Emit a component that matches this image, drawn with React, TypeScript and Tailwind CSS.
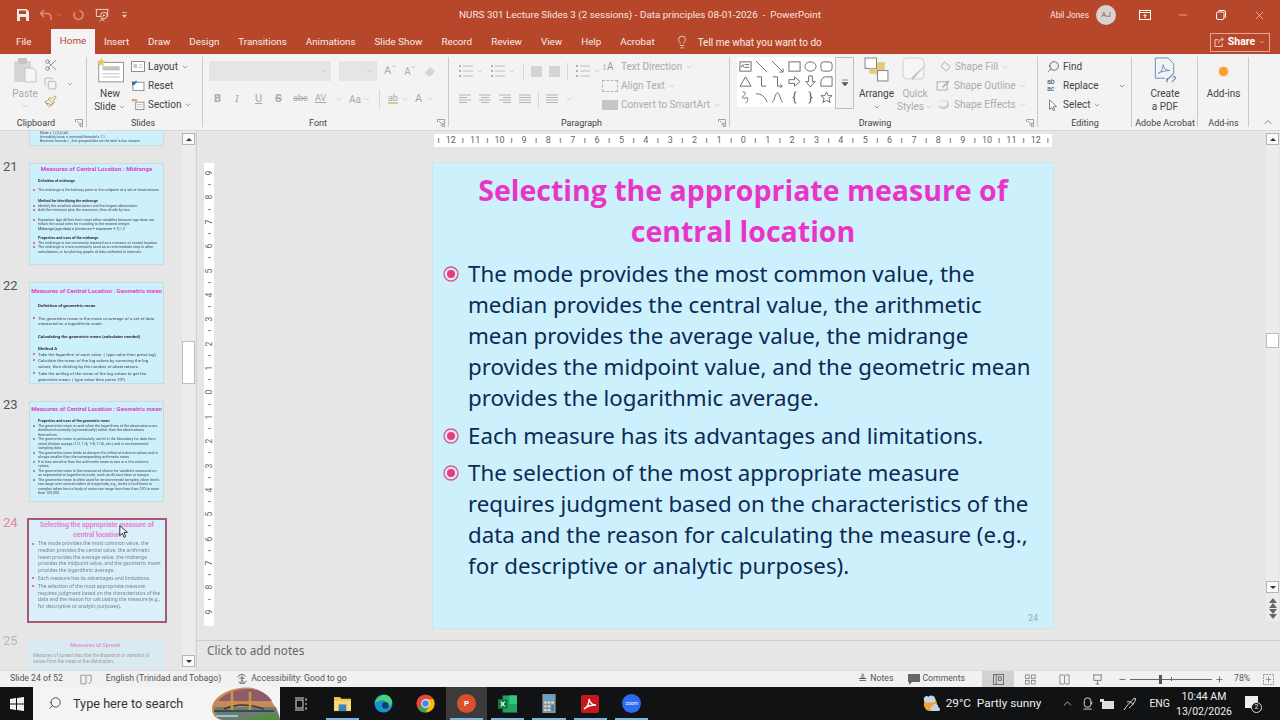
import * as React from 'react';
import {
  ChevronDown,
  ChevronUp,
  Copy,
  Lightbulb,
  Minus,
  Paintbrush,
  Plus,
  Scissors,
  Search,
  X,
} from 'lucide-react';

const Chev = ({ className = 'text-[#666]' }: { className?: string }) => (
  <ChevronDown size={8} strokeWidth={1.6} className={`shrink-0 ${className}`} />
);

function Group({
  width,
  label,
  launcher,
  labelClass = '',
  children,
}: {
  width: string;
  label: string;
  launcher?: boolean;
  labelClass?: string;
  children: React.ReactNode;
}) {
  return (
    <div className={`relative flex h-[76px] shrink-0 flex-col ${width}`}>
      <div className="flex min-h-0 flex-1 pt-[3px]">{children}</div>
      <div className={`h-[14px] text-center text-[9px] leading-[15px] whitespace-nowrap text-[#444] ${labelClass}`}>{label}</div>
      <div className="absolute top-[3px] right-0 h-[70px] w-px bg-[#c9c9c9]" />
      {launcher && (
        <svg viewBox="0 0 8 8" className="absolute right-[4px] bottom-[3px] h-[8px] w-[8px]">
          <path d="M.5 3V.5H7.5V7.5H5M2 2l4 4M6 3.5V6H3.5" fill="none" stroke="#8a8a8a" strokeWidth=".8" />
        </svg>
      )}
    </div>
  );
}

function SmallBtn({
  icon,
  label,
  chev,
  off,
}: {
  icon?: React.ReactNode;
  label: string;
  chev?: boolean;
  off?: boolean;
}) {
  return (
    <div className={`flex h-[19px] items-center gap-[3px] whitespace-nowrap text-[10px] ${off ? 'text-[#ababab]' : 'text-[#444]'}`}>
      {icon}
      <span>{label}</span>
      {chev && <Chev className={off ? 'text-[#b5b5b5]' : 'text-[#555]'} />}
    </div>
  );
}

const ListIcon = () => (
  <svg viewBox="0 0 16 14" className="h-[14px] w-[16px]" fill="none" stroke="#bdbdbd">
    <path d="M5 2h10M5 7h10M5 12h10" />
    <path d="M1 2h2M1 7h2M1 12h2" stroke="#9a9a9a" strokeWidth="1.6" />
  </svg>
);

const AlignIcon = ({ d }: { d: string }) => (
  <svg viewBox="0 0 14 10" className="h-[10px] w-[14px]" fill="none" stroke="#b4b4b4">
    <path d={d} />
  </svg>
);

function Clipboard() {
  return (
    <div className="flex pl-[12px]">
      <div className="flex w-[26px] flex-col items-center">
        <svg viewBox="0 0 24 26" className="h-[26px] w-[24px]">
          <rect x="1" y="4" width="17" height="21" rx="1" fill="#d6d6d6" />
          <rect x="5" y="1" width="9" height="6" rx="1" fill="#c4c4c4" />
          <path d="M12 11h8l3 3v11H12z" fill="#f6f6f6" stroke="#c2c2c2" />
        </svg>
        <span className="mt-[4px] text-[10px] leading-[13px] text-[#ababab]">Paste</span>
        <Chev className="mt-[2px] text-[#b5b5b5]" />
      </div>
      <div className="ml-[6px] flex flex-col gap-[5px] pt-[1px]">
        <Scissors size={14} strokeWidth={1.2} className="text-[#5d6d7a]" />
        <div className="flex items-center gap-[9px]">
          <Copy size={13} strokeWidth={1.2} className="text-[#999]" />
          <Chev />
        </div>
        <Paintbrush size={13} strokeWidth={1.5} className="text-[#a98f3c]" />
      </div>
    </div>
  );
}

function Slides() {
  return (
    <div className="flex pl-[8px]">
      <div className="flex w-[30px] flex-col items-center text-[10px] leading-[13px] whitespace-nowrap text-[#444]">
        <svg viewBox="0 0 26 24" className="h-[27px] w-[28px] shrink-0">
          <rect x="2.5" y="4.5" width="23" height="18" fill="#fff" stroke="#9b9b9b" />
          <rect x="6" y="8" width="16" height="4" fill="#c4c4c4" />
          <path d="M6 15h16M6 18h16" stroke="#c4c4c4" />
          <path d="M5 0l1.3 2.7L9 3.5 6.8 5.3 7.4 8 5 6.6 2.6 8l.6-2.7L1 3.5l2.7-.8z" fill="#eac46a" />
        </svg>
        <span className="mt-[3px]">New</span>
        <span className="flex items-center gap-[2px]">Slide <Chev /></span>
      </div>
      <div className="ml-[6px] flex flex-col">
        <SmallBtn
          chev
          label="Layout"
          icon={
            <svg viewBox="0 0 14 11" className="h-[11px] w-[14px]" fill="#fff" stroke="#8d8d8d">
              <rect x=".5" y=".5" width="13" height="10" />
              <rect x="2.5" y="3" width="3.5" height="4" fill="#c9c9c9" stroke="none" />
              <path d="M7.5 4h4M7.5 6.5h4" stroke="#c9c9c9" />
            </svg>
          }
        />
        <SmallBtn
          label="Reset"
          icon={
            <svg viewBox="0 0 14 12" className="h-[11px] w-[14px]" fill="#fff" stroke="#8d8d8d">
              <rect x="1.5" y="2.5" width="12" height="9" />
              <path d="M1 5a4 4 0 0 1 5-3" stroke="#2f6ea8" fill="none" strokeWidth="1.4" />
              <path d="M0 1l1 5 4-2z" fill="#2f6ea8" stroke="none" />
            </svg>
          }
        />
        <SmallBtn
          chev
          label="Section"
          icon={
            <svg viewBox="0 0 14 12" className="h-[11px] w-[14px]" fill="#fff" stroke="#8d8d8d">
              <rect x="4.5" y="3.5" width="9" height="8" />
              <rect x="0" y="0" width="6" height="2.5" fill="#e0a27e" stroke="none" />
              <path d="M6 6h6M6 8.5h6" stroke="#bbb" />
            </svg>
          }
        />
      </div>
    </div>
  );
}

function Font() {
  return (
    <div className="flex flex-col pl-[6px]">
      <div className="flex h-[26px] items-center pt-[2px]">
        <div className="flex h-[20px] w-[122px] items-center justify-end bg-[#e5e5e5] pr-[3px]">
          <Chev className="text-[#b5b5b5]" />
        </div>
        <div className="ml-[8px] flex h-[20px] w-[38px] items-center justify-end bg-[#e5e5e5] pr-[3px]">
          <Chev className="text-[#b5b5b5]" />
        </div>
        <span className="ml-[7px] text-[11px] text-[#adadad]">Aˆ</span>
        <span className="ml-[8px] text-[10px] text-[#adadad]">Aˇ</span>
        <svg viewBox="0 0 12 12" className="ml-[9px] h-[12px] w-[12px]">
          <path d="M1 8l5-6 5 4-4 5H4z" fill="#d4d4d4" />
        </svg>
      </div>
      <div className="mt-[5px] flex h-[22px] items-center text-[11px] text-[#a8a8a8]">
        <span className="ml-[5px] w-[21px] font-bold">B</span>
        <span className="w-[20px] font-serif italic">I</span>
        <span className="w-[20px] underline">U</span>
        <span className="w-[18px] font-bold line-through">S</span>
        <span className="w-[22px] text-[9px] line-through">abc</span>
        <span className="w-[20px] text-[9px] underline">AV</span>
        <Chev className="text-[#b5b5b5]" />
        <span className="ml-[6px] text-[10px]">Aa</span>
        <Chev className="ml-[2px] text-[#b5b5b5]" />
        <div className="mx-[8px] h-[18px] w-px bg-[#d6d6d6]" />
        <span className="text-[9px] underline decoration-[#d4cf82] decoration-2">ab</span>
        <Chev className="ml-[3px] text-[#b5b5b5]" />
        <span className="ml-[6px] text-[11px]">A</span>
        <Chev className="ml-[4px] text-[#b5b5b5]" />
      </div>
    </div>
  );
}

function Paragraph() {
  return (
    <div className="flex">
      <div className="flex w-[153px] flex-col pl-[9px]">
        <div className="flex h-[26px] items-center pt-[2px]">
          <ListIcon />
          <Chev className="ml-[2px] text-[#b5b5b5]" />
          <div className="ml-[6px]"><ListIcon /></div>
          <Chev className="ml-[2px] text-[#b5b5b5]" />
          <div className="mx-[7px] h-[17px] w-px bg-[#d6d6d6]" />
          <div className="h-[11px] w-[11px] bg-[#d4d4d4]" />
          <div className="ml-[7px] h-[11px] w-[11px] bg-[#d4d4d4]" />
          <div className="mx-[7px] h-[17px] w-px bg-[#d6d6d6]" />
          <ListIcon />
          <Chev className="ml-[2px] text-[#b5b5b5]" />
        </div>
        <div className="mt-[5px] flex h-[22px] items-center gap-[6px]">
          <AlignIcon d="M1 1h12M1 3.5h8M1 6h12M1 8.5h8" />
          <AlignIcon d="M1 1h12M3 3.5h8M1 6h12M3 8.5h8" />
          <AlignIcon d="M1 1h12M5 3.5h8M1 6h12M5 8.5h8" />
          <AlignIcon d="M1 1h12M1 3.5h12M1 6h12M1 8.5h12" />
          <div className="h-[17px] w-px bg-[#d6d6d6]" />
          <AlignIcon d="M1 1h12M1 3.5h12M1 6h12M1 8.5h12" />
          <Chev className="text-[#b5b5b5]" />
        </div>
      </div>
      <div className="flex flex-col">
        <SmallBtn off chev label="Text Direction" icon={<span className="w-[16px] text-[10px] text-[#999]">↕A</span>} />
        <SmallBtn off chev label="Align Text" icon={<span className="h-[12px] w-[16px] border border-dashed border-[#b5b5b5]" />} />
        <SmallBtn off chev label="Convert to SmartArt" icon={<span className="h-[10px] w-[16px] bg-[#c6c6c6]" />} />
      </div>
    </div>
  );
}

function ShapesGallery() {
  return (
    <div className="ml-[7px] flex h-[52px]">
      <div className="grid h-[50px] w-[98px] grid-cols-6 place-items-center bg-white py-[2px]">
        <svg viewBox="0 0 14 14" className="h-[13px] w-[13px]" fill="none" stroke="#666"><rect x="1" y="2" width="12" height="10" /><path d="M6 5h5M6 8h5M2.5 8l1.5-3 1.5 3" /></svg>
        <svg viewBox="0 0 14 14" className="h-[13px] w-[13px]" fill="none" stroke="#666"><path d="M1 1l12 12" /></svg>
        <svg viewBox="0 0 14 14" className="h-[13px] w-[13px]" fill="none" stroke="#666"><path d="M1 1l12 12M13 9v4H9" /></svg>
        <svg viewBox="0 0 14 14" className="h-[13px] w-[13px]" fill="none" stroke="#666"><rect x="1" y="2" width="12" height="10" /></svg>
        <svg viewBox="0 0 14 14" className="h-[13px] w-[13px]" fill="none" stroke="#666"><ellipse cx="7" cy="7" rx="6" ry="5" /></svg>
        <svg viewBox="0 0 14 14" className="h-[13px] w-[13px]" fill="none" stroke="#666"><rect x="1" y="2" width="12" height="10" rx="3" /></svg>
        <svg viewBox="0 0 14 14" className="h-[13px] w-[13px]" fill="none" stroke="#666"><path d="M7 2l6 10H1z" /></svg>
        <svg viewBox="0 0 14 14" className="h-[13px] w-[13px]" fill="none" stroke="#666"><path d="M2 2h5v10h5" /></svg>
        <svg viewBox="0 0 14 14" className="h-[13px] w-[13px]" fill="none" stroke="#666"><path d="M2 2h5v10h5M10 10l2 2-2 2" /></svg>
        <svg viewBox="0 0 14 14" className="h-[13px] w-[13px]" fill="none" stroke="#666"><path d="M1 5h6V2l6 5-6 5V9H1z" /></svg>
        <svg viewBox="0 0 14 14" className="h-[13px] w-[13px]" fill="none" stroke="#666"><path d="M5 1h4v6h3l-5 6-5-6h3z" /></svg>
        <svg viewBox="0 0 14 14" className="h-[13px] w-[13px]" fill="none" stroke="#666"><path d="M1 7a6 6 0 0 1 6-5h6v10H1z" /></svg>
        <svg viewBox="0 0 14 14" className="h-[13px] w-[13px]" fill="none" stroke="#666"><path d="M4 1c5 0 2 4 0 5s3 3 4 1 3 4-1 6" /></svg>
        <svg viewBox="0 0 14 14" className="h-[13px] w-[13px]" fill="none" stroke="#666"><path d="M1 3c6 0 10 3 12 9" /></svg>
        <svg viewBox="0 0 14 14" className="h-[13px] w-[13px]" fill="none" stroke="#666"><path d="M1 12c3 0 3-10 6-10s3 10 6 10" /></svg>
        <span className="text-[12px] leading-none text-[#555]">{'{'}</span>
        <span className="text-[12px] leading-none text-[#555]">{'}'}</span>
        <svg viewBox="0 0 14 14" className="h-[13px] w-[13px]" fill="none" stroke="#666"><path d="M7 1l1.8 4H13l-3.4 2.8 1.3 4.7L7 10l-3.9 2.5 1.3-4.7L1 5h4.200z" /></svg>
      </div>
      <div className="flex h-[52px] w-[19px] items-center justify-center border border-[#bfbfbf] bg-[#f3f3f3] text-[#555]">
        <svg viewBox="0 0 8 8" className="h-[8px] w-[8px]"><path d="M1 1h6M1 3.500h6L4 7z" fill="#555" stroke="#555" strokeWidth=".6" /></svg>
      </div>
    </div>
  );
}

function Drawing() {
  return (
    <div className="flex">
      <ShapesGallery />
      <div className="ml-[4px] flex w-[37px] flex-col items-center text-[10px] leading-[13px] text-[#444]">
        <svg viewBox="0 0 24 24" className="h-[25px] w-[25px]">
          <rect x="11" y="5" width="9" height="12" fill="#e6c97a" />
          <rect x="1" y="1" width="11" height="10" fill="#fff" stroke="#8a8a8a" />
          <rect x="13" y="13" width="10" height="10" fill="#fff" stroke="#8a8a8a" />
          <rect x="5" y="11" width="6" height="5" fill="#e6c97a" />
        </svg>
        <span className="mt-[5px]">Arrange</span>
        <Chev className="mt-[3px]" />
      </div>
      <div className="ml-[2px] flex w-[36px] flex-col items-center text-[10px] leading-[13px] text-[#ababab]">
        <svg viewBox="0 0 26 26" className="h-[26px] w-[26px]">
          <rect x="1" y="1" width="21" height="21" rx="4" fill="#f6f6f6" stroke="#cfcfcf" />
          <path d="M25 7L15 18l-4 5-2-2 5-5z" fill="#c5c5c5" />
        </svg>
        <span className="mt-[4px]">Quick</span>
        <span className="flex items-center gap-[1px]">Styles <Chev className="text-[#b5b5b5]" /></span>
      </div>
      <div className="ml-[3px] flex flex-col">
        <SmallBtn off chev label="Shape Fill" icon={<svg viewBox="0 0 14 12" className="ml-[3px] h-[11px] w-[13px]" fill="none" stroke="#a8a8a8"><path d="M6 1l6 5-4 5-6-5z" /></svg>} />
        <SmallBtn off chev label="Shape Outline" icon={<svg viewBox="0 0 16 12" className="h-[11px] w-[15px]" fill="none" stroke="#a8a8a8"><rect x="1" y="2" width="11" height="9" /><path d="M7 8l7-7" strokeWidth="1.6" /></svg>} />
        <SmallBtn off chev label="Shape Effects" icon={<svg viewBox="0 0 16 12" className="h-[11px] w-[15px]"><ellipse cx="8" cy="6" rx="6" ry="5" fill="#c9c9c9" /><ellipse cx="7" cy="5" rx="5" ry="3.500" fill="#f2f2f2" /></svg>} />
      </div>
    </div>
  );
}

function Editing() {
  return (
    <div className="flex flex-col pl-[9px]">
      <SmallBtn label="Find" icon={<Search size={13} strokeWidth={1.4} className="-scale-x-100 text-[#2b4c6b]" />} />
      <div className="flex h-[19px] items-center whitespace-nowrap text-[10px] text-[#444]">
        <span className="w-[16px] text-[7px] leading-[7px] text-[#2b4c6b]">ab<br />ac</span>
        <span>Replace</span>
        <Chev className="ml-[19px]" />
      </div>
      <SmallBtn
        chev
        label="Select"
        icon={
          <svg viewBox="0 0 12 14" className="mr-[1px] h-[12px] w-[12px]" fill="#fff" stroke="#5a6a7a">
            <path d="M2 1l8 8H6l2 4-1.500.8L4.500 10 2 12z" />
          </svg>
        }
      />
    </div>
  );
}

function Adobe() {
  return (
    <div className="flex w-full flex-col items-center text-[10px] leading-[13px] text-[#444]">
      <svg viewBox="0 0 24 28" className="h-[27px] w-[24px]" fill="none" stroke="#5e8fbd" strokeWidth="1">
        <path d="M2 1h13l6 6v10M2 1v21h10" />
        <path d="M5 17c4-2 5-6 5-9 1 4 3 6 7 6-4 0-9 1-12 3z" />
        <path d="M14 24l7-7m-6 9c-2-1-2-3 0-4m5-1c2-2 4 1 2 2l-3 3" strokeWidth="1.200" />
      </svg>
      <span className="mt-[3px]">Create</span>
      <span>a PDF</span>
    </div>
  );
}

function Ribbon() {
  return (
    <div className="flex h-[77px] shrink-0 border-b border-[#d8d8d8] bg-[#f3f3f3]">
      <Group width="w-[87px]" label="Clipboard" labelClass="pr-[15px]" launcher>
        <Clipboard />
      </Group>
      <Group width="w-[116px]" label="Slides" labelClass="pr-[4px]">
        <Slides />
      </Group>
      <Group width="w-[246px]" label="Font" labelClass="pr-[16px]" launcher>
        <Font />
      </Group>
      <Group width="w-[281px]" label="Paragraph" labelClass="pr-[16px]" launcher>
        <Paragraph />
      </Group>
      <Group width="w-[308px]" label="Drawing" labelClass="pr-[18px]" launcher>
        <Drawing />
      </Group>
      <Group width="w-[94px]" label="Editing">
        <Editing />
      </Group>
      <Group width="w-[66px]" label="Adobe Acrobat">
        <Adobe />
      </Group>
      <Group width="w-[51px]" label="Add-ins">
        <div className="flex w-full flex-col items-center">
          <div className="mt-[10px] h-[9px] w-[9px] rounded-full bg-[#f7a02c] shadow-[0_0_3px_#f9c47a]" />
          <span className="mt-[11px] text-[10px] leading-[13px] text-[#444]">Add-ins</span>
        </div>
      </Group>
      <div className="flex flex-1 items-end justify-end pr-[6px] pb-[2px]">
        <ChevronUp size={12} strokeWidth={1.4} className="text-[#555]" />
      </div>
    </div>
  );
}

function TitleBar() {
  return (
    <div className="grid h-[30px] shrink-0 grid-cols-[1fr_auto_1fr] items-center bg-[#b7472a] text-white">
      <div className="flex items-center pl-[17px]">
        <svg viewBox="0 0 12 12" className="h-[12px] w-[12px]" fill="#f7e9e4">
          <path d="M0 0h9.500L12 2.500V12H0zM2 1.500V5h7V1.500zM3 8v4h6V8z" fillRule="evenodd" />
        </svg>
        <svg viewBox="0 0 14 12" className="ml-[10px] h-[12px] w-[14px]" fill="none" stroke="#d98b74" strokeWidth="1.600">
          <path d="M5 1L1.500 4.500 5 8M2 4.500h6a4 4 0 0 1 4 4V11" />
        </svg>
        <Chev className="ml-[2px] text-[#d98b74]" />
        <svg viewBox="0 0 12 12" className="ml-[9px] h-[12px] w-[12px]" fill="none" stroke="#d98b74" strokeWidth="1.600">
          <path d="M7.500 1.500A4.500 4.500 0 1 1 3 3" />
        </svg>
        <svg viewBox="0 0 16 16" className="ml-[10px] h-[15px] w-[16px]" fill="none" stroke="#f3d9d0">
          <path d="M1 1.500h14M2 2v7h12V2M8 9v3M5.500 14L8 12l2.500 2" />
          <circle cx="10" cy="8" r="3.500" fill="#b7472a" />
          <path d="M9 6.500l2.500 1.500L9 9.500z" fill="#f3d9d0" stroke="none" />
        </svg>
        <svg viewBox="0 0 6 8" className="ml-[12px] h-[7px] w-[5px]" fill="#ecc7ba">
          <path d="M0 0h6v1H0zM0 3h6L3 7z" />
        </svg>
      </div>
      <div className="text-[9.9px] text-[#f6e6e1]">NURS 301 Lecture Slides 3 (2 sessions) - Data principles 08-01-2026&nbsp; -&nbsp; PowerPoint</div>
      <div className="flex items-center justify-end pr-[14px]">
        <span className="text-[8.3px] text-[#f6e6e1]">Abil Jones</span>
        <div className="ml-[7px] flex h-[20px] w-[20px] items-center justify-center rounded-full bg-[#d8d3d2] text-[8px] text-[#8a5a4d]">AJ</div>
        <svg viewBox="0 0 12 10" className="ml-[23px] h-[10px] w-[12px]" fill="none" stroke="#fff">
          <rect x=".5" y=".5" width="11" height="9" />
          <path d="M.5 2.500h11M6 8V4.500M4.500 6L6 4.500 7.500 6" />
        </svg>
        <Minus size={12} strokeWidth={1} className="ml-[26px]" />
        <svg viewBox="0 0 10 10" className="ml-[27px] h-[10px] w-[10px]" fill="none" stroke="#fff">
          <rect x=".5" y="2" width="7.500" height="7.500" rx="1.500" />
          <path d="M2.500 .5h5.500a1.500 1.500 0 0 1 1.500 1.500v5.500" />
        </svg>
        <X size={13} strokeWidth={1} className="ml-[27px]" />
      </div>
    </div>
  );
}

const TABS = ['Insert', 'Draw', 'Design', 'Transitions', 'Animations', 'Slide Show', 'Record', 'Review', 'View', 'Help', 'Acrobat'];

function TabBar() {
  return (
    <div className="flex h-[24px] shrink-0 items-center bg-[#b7472a] text-[9.8px] text-[#f9ece8]">
      <span className="ml-[16px] w-[35px]">File</span>
      <div className="flex h-[25px] w-[44px] items-center justify-center self-end bg-[#f3f3f3] text-[#b7472a]">Home</div>
      <div className="ml-[9px] flex items-center gap-[19px]">
        {TABS.map((t) => (
          <span key={t} className="whitespace-nowrap">{t}</span>
        ))}
      </div>
      <Lightbulb size={14} strokeWidth={1.3} className="ml-[20px]" />
      <span className="ml-[9px] text-[10px]">Tell me what you want to do</span>
      <div className="mr-[10px] ml-auto flex h-[19px] w-[60px] items-center justify-center gap-[3px] border border-[#e6a68f] text-[10.5px] font-bold text-white">
        <svg viewBox="0 0 12 11" className="h-[10px] w-[11px]" fill="none" stroke="#f6dcd2">
          <path d="M5 3H1v7.500h8V7M5 6.500C5 4 7 2.500 9 2.500M8 .5l2.500 2L8 4.500" />
        </svg>
        Share
        <Chev className="text-[#f6dcd2]" />
      </div>
    </div>
  );
}

function ThumbHead({ children, className = '' }: { children: React.ReactNode; className?: string }) {
  return <div className={`pl-[8px] font-bold text-[#333] ${className}`}>{children}</div>;
}

function ThumbBullet({ children, className = '' }: { children: React.ReactNode; className?: string }) {
  return (
    <div className={`flex gap-[3px] pl-[3px] text-[#4a4a4a] ${className}`}>
      <span className="mt-[1px] h-[2px] w-[2px] shrink-0 rounded-full bg-[#d9468f]" />
      <span>{children}</span>
    </div>
  );
}

function Thumb({
  n,
  title,
  children,
  className,
  titleClass,
}: {
  n: number;
  title: React.ReactNode;
  children: React.ReactNode;
  className: string;
  titleClass: string;
}) {
  return (
    <div className="flex shrink-0">
      <div className="-mt-[3px] w-[29px] pl-[3px] text-[13px] leading-[14px] text-[#555]">{n}</div>
      <div className={`w-[135px] overflow-hidden border border-[#cfd8dc] bg-[#cdf0fd] pr-[3px] ${className}`}>
        <div className={`-mr-[3px] text-center text-[6.1px] leading-[9px] font-bold whitespace-nowrap text-[#e23fc6] ${titleClass}`}>{title}</div>
        <div className="blur-[0.25px]">{children}</div>
      </div>
    </div>
  );
}

const BODY_A = [
  'The mode provides the most common value, the',
  'median provides the central value, the arithmetic',
  'mean provides the average value, the midrange',
  'provides the midpoint value, and the geometric mean',
  'provides the logarithmic average.',
];
const BODY_B = ['Each measure has its advantages and limitations.'];
const BODY_C = [
  'The selection of the most appropriate measure',
  'requires judgment based on the characteristics of the',
  'data and the reason for calculating the measure (e.g.,',
  'for descriptive or analytic purposes).',
];

function MiniBody({ lines }: { lines: string[] }) {
  return (
    <div className="flex gap-[4px] pl-[3px]">
      <span className="mt-[2.5px] h-[2px] w-[2px] shrink-0 rounded-full bg-[#d9468f]" />
      <div className="whitespace-nowrap">
        {lines.map((l) => (
          <div key={l}>{l}</div>
        ))}
      </div>
    </div>
  );
}

function ThumbnailPane() {
  return (
    <div className="flex h-full w-[197px] shrink-0 border-r border-[#cfcfcf]">
      <div className="flex w-[182px] shrink-0 flex-col gap-[17px] overflow-hidden">
        <div className="ml-[29px] flex h-[15px] w-[135px] shrink-0 flex-col justify-end overflow-hidden border border-t-0 border-[#cfd8dc] bg-[#cdf0fd] pb-[2px] pl-[10px] text-[3.4px] leading-[4px] text-[#4a4a4a] blur-[0.25px]">
          <div>Mode = 1,2,3,4 (all)</div>
          <div>bimodality issue: = unimodal/bimodal = 1.1</div>
          <div>Business formula (: , first grouped data set the total is four classes</div>
        </div>
        <Thumb n={21} title="Measures of Central Location : Midrange" titleClass="" className="h-[102px] text-[3.7px] leading-[4.5px]">
          <ThumbHead className="mt-[6px]">Definition of midrange</ThumbHead>
          <ThumbBullet className="mt-[4px]">The midrange is the halfway point or the midpoint of a set of observations.</ThumbBullet>
          <ThumbHead className="mt-[7px]">Method for identifying the midrange</ThumbHead>
          <ThumbBullet>Identify the smallest observation and the largest observation.</ThumbBullet>
          <ThumbBullet>Add the minimum plus the maximum, then divide by two.</ThumbBullet>
          <ThumbBullet className="mt-[5px]">Exception: Age differs from most other variables because age does not follow the usual rules for rounding to the nearest integer.</ThumbBullet>
          <ThumbHead className="font-normal">Midrange (age data) = (minimum + maximum + 1) / 2</ThumbHead>
          <ThumbHead className="mt-[5px]">Properties and uses of the midrange</ThumbHead>
          <ThumbBullet>The midrange is not commonly reported as a measure of central location.</ThumbBullet>
          <ThumbBullet>The midrange is more commonly used as an intermediate step in other calculations, or for plotting graphs of data collected in intervals.</ThumbBullet>
        </Thumb>
        <Thumb n={22} title="Measures of Central Location : Geometric mean" titleClass="pt-[3px]" className="h-[102px] text-[4.4px] leading-[5.5px]">
          <ThumbHead className="mt-[8px]">Definition of geometric mean</ThumbHead>
          <ThumbBullet className="mt-[7px]">The geometric mean is the mean or average of a set of data measured on a logarithmic scale.</ThumbBullet>
          <ThumbHead className="mt-[7px]">Calculating the geometric mean (calculator needed)</ThumbHead>
          <ThumbHead className="mt-[7px]">Method A</ThumbHead>
          <ThumbBullet>Take the logarithm of each value. ( type value then press log)</ThumbBullet>
          <ThumbBullet className="mt-[1px]">Calculate the mean of the log values by summing the log values, then dividing by the number of observations.</ThumbBullet>
          <ThumbBullet className="mt-[2px]">Take the antilog of the mean of the log values to get the geometric mean. ( type value then press 10ˣ)</ThumbBullet>
        </Thumb>
        <Thumb n={23} title="Measures of Central Location : Geometric mean" titleClass="pt-[2px]" className="h-[101px] text-[3.7px] leading-[4.5px]">
          <ThumbHead className="mt-[6px]">Properties and uses of the geometric mean</ThumbHead>
          <ThumbBullet>The geometric mean is used when the logarithms of the observations are distributed normally (symmetrically) rather than the observations themselves.</ThumbBullet>
          <ThumbBullet>The geometric mean is particularly useful in the laboratory for data from serial dilution assays (1/2, 1/4, 1/8, 1/16, etc.) and in environmental sampling data.</ThumbBullet>
          <ThumbBullet>The geometric mean tends to dampen the effect of extreme values and is always smaller than the corresponding arithmetic mean.</ThumbBullet>
          <ThumbBullet>It is less sensitive than the arithmetic mean to one or a few extreme values.</ThumbBullet>
          <ThumbBullet>The geometric mean is the measure of choice for variables measured on an exponential or logarithmic scale, such as dilution titers or assays.</ThumbBullet>
          <ThumbBullet>The geometric mean is often used for environmental samples, when levels can range over several orders of magnitude, e.g., levels of coliforms in samples taken from a body of water can range from less than 100 to more than 100,000.</ThumbBullet>
        </Thumb>
        <div className="-mt-[1px] flex shrink-0">
          <div className="-mt-[2px] w-[27px] pl-[3px] text-[13px] leading-[14px] text-[#d38aa2]">24</div>
          <div className="h-[105px] w-[140px] overflow-hidden border-[2.5px] border-[#a35a74] bg-[#d9eff9] font-['Noto_Sans',sans-serif] text-[4.86px] leading-[6.75px] text-[#77808c]">
            <div className="pt-[1px] text-center font-['Roboto',sans-serif] text-[6.85px] leading-[9.500px] font-bold text-[#e57fd3]">
              Selecting the appropriate measure of<br />central location
            </div>
            <div className="flex flex-col gap-[1.2px] blur-[0.25px]">
              <MiniBody lines={BODY_A} />
              <MiniBody lines={BODY_B} />
              <MiniBody lines={BODY_C} />
            </div>
          </div>
        </div>
        <div className="flex shrink-0 opacity-50">
          <div className="-mt-[6px] w-[29px] pl-[3px] text-[13px] leading-[14px] text-[#888]">25</div>
          <div className="h-[102px] w-[135px] bg-[#cdf0fd] pr-[3px] text-[4.5px] leading-[6px]">
            <div className="pt-[2px] text-center text-[5.5px] font-bold text-[#e23fc6]">Measures of Spread</div>
            <div className="mt-[5px] pl-[4px] text-[#555]">Measures of spread describe the dispersion or variation of values from the mean or the distribution.</div>
          </div>
        </div>
      </div>
      <Scrollbar thumbClass="mt-[196px] h-[43px]" bottomClass="mb-[3px]" />
    </div>
  );
}

function Scrollbar({
  thumbClass,
  bottomClass,
  children,
}: {
  thumbClass: string;
  bottomClass: string;
  children?: React.ReactNode;
}) {
  return (
    <div className="flex w-[13px] shrink-0 flex-col bg-[#ececec] pt-[2px]">
      <div className="flex h-[12px] shrink-0 items-center justify-center border border-[#b5b5b5] bg-[#fafafa]">
        <span className="h-0 w-0 border-x-[3px] border-b-[3px] border-x-transparent border-b-[#333]" />
      </div>
      <div className={`shrink-0 border border-[#bdbdbd] bg-white ${thumbClass}`} />
      <div className={`mt-auto flex h-[12px] shrink-0 items-center justify-center border border-[#b5b5b5] bg-[#fafafa] ${bottomClass}`}>
        <span className="h-0 w-0 border-x-[3px] border-t-[3px] border-x-transparent border-t-[#333]" />
      </div>
      {children}
    </div>
  );
}

const HRULER: string[] = [];
for (let i = 12; i >= 0; i--) {
  HRULER.push('ı', String(i));
}
for (let i = 1; i <= 12; i++) {
  HRULER.push('ı', String(i));
}
HRULER.push('ı');

function HorizontalRuler() {
  return (
    <div className="mt-[3px] ml-[237px] flex h-[13px] w-[618px] items-center overflow-hidden bg-white text-[9px] leading-none text-[#666]">
      {HRULER.map((v, i) => (
        <span key={i} className="w-[12.2px] shrink-0 text-center first:-ml-[1.5px]">{v}</span>
      ))}
    </div>
  );
}

const VRULER: string[] = [];
for (let i = 9; i >= 0; i--) {
  VRULER.push(String(i), 'ı');
}
for (let i = 1; i <= 9; i++) {
  VRULER.push(String(i), 'ı');
}
VRULER.pop();

function VerticalRuler() {
  return (
    <div className="flex h-[463px] w-[10px] shrink-0 flex-col items-center bg-white pt-[4px] text-[8.5px] leading-none text-[#666]">
      {VRULER.map((v, i) => (
        <span key={i} className="flex h-[12.2px] w-[10px] shrink-0 -rotate-90 items-center justify-center">
          {v === 'ı' ? <span className="h-px w-[3px] rotate-90 bg-[#888]" /> : v}
        </span>
      ))}
    </div>
  );
}

const Bullet = () => (
  <svg viewBox="0 0 16 16" className="mt-[8px] h-[16px] w-[16px] shrink-0">
    <circle cx="8" cy="8" r="7" fill="none" stroke="#ea4f86" strokeWidth="1.300" />
    <circle cx="8" cy="8" r="4" fill="#ea3b7d" />
  </svg>
);

function SlideBody({ lines }: { lines: string[] }) {
  return (
    <div className="flex gap-[9px] pl-[10px]">
      <Bullet />
      <div className="whitespace-nowrap">
        {lines.map((l) => (
          <div key={l}>{l}</div>
        ))}
      </div>
    </div>
  );
}

function Slide() {
  return (
    <div className="flex h-[465px] w-[620px] shrink-0 flex-col bg-[#cdf0fd] shadow-[0_0_0_1px_#d4e2e8]">
      <div className="pt-[7px] text-center font-['Open_Sans',sans-serif] text-[28.5px] leading-[41px] font-bold text-[#ea34c8]">
        Selecting the appropriate measure of<br />central location
      </div>
      <div className="mt-[6px] flex flex-col gap-[6.5px] font-['Noto_Sans',sans-serif] text-[22.3px] leading-[31px] text-[#0c2a55]">
        <SlideBody lines={BODY_A} />
        <SlideBody lines={BODY_B} />
        <SlideBody lines={BODY_C} />
      </div>
      <div className="mt-auto pr-[15px] pb-[3px] text-right text-[9px] text-[#8fb1c0]">24</div>
    </div>
  );
}

function Editor() {
  return (
    <div className="flex min-w-0 flex-1 flex-col">
      <div className="flex h-[510px] shrink-0 border-b border-[#cdcdcd]">
        <div className="min-w-0 flex-1">
          <HorizontalRuler />
          <div className="mt-[16px] flex pl-[7px]">
            <VerticalRuler />
            <div className="ml-[219px]">
              <Slide />
            </div>
          </div>
        </div>
        <div className="mr-px flex h-[490px]">
          <Scrollbar thumbClass="mt-[188px] h-[15px]" bottomClass="">
            <div className="mt-[5px] flex flex-col items-center gap-[1px] pb-[2px]">
              <span className="flex flex-col items-center leading-none">
                <span className="h-0 w-0 border-x-[4px] border-b-[5px] border-x-transparent border-b-[#666]" />
                <span className="h-0 w-0 border-x-[4px] border-b-[5px] border-x-transparent border-b-[#666]" />
              </span>
              <span className="flex flex-col items-center leading-none">
                <span className="h-0 w-0 border-x-[4px] border-t-[5px] border-x-transparent border-t-[#666]" />
                <span className="h-0 w-0 border-x-[4px] border-t-[5px] border-x-transparent border-t-[#666]" />
              </span>
            </div>
          </Scrollbar>
        </div>
      </div>
      <div className="flex flex-1 items-center pb-[9px] pl-[10px] font-['Noto_Sans',sans-serif] text-[11.7px] text-[#666]">Click to add notes</div>
    </div>
  );
}

function StatusBar() {
  return (
    <div className="flex h-[17px] shrink-0 items-center border-t border-[#dcdcdc] bg-[#f1f1f1] text-[8.7px] text-[#555]">
      <span className="ml-[10px]">Slide 24 of 52</span>
      <svg viewBox="0 0 14 12" className="ml-[17px] h-[11px] w-[12px]" fill="none" stroke="#888">
        <path d="M1 1h5l1 1v9H1zM7 2l1-1h5v7M10 10l1 1 2-3" />
      </svg>
      <span className="ml-[14px]">English (Trinidad and Tobago)</span>
      <svg viewBox="0 0 14 14" className="ml-[15px] h-[12px] w-[12px]" fill="none" stroke="#555">
        <path d="M2 5a5 5 0 0 1 9-1M12 9a5 5 0 0 1-9 1M7 3v5M4 6h6M5 12l2-4 2 4" />
      </svg>
      <span className="ml-[3px]">Accessibility: Good to go</span>
      <div className="ml-auto flex items-center">
        <span className="text-[11px] leading-none">≜</span>
        <span className="ml-[3px]">Notes</span>
        <svg viewBox="0 0 12 11" className="ml-[15px] h-[11px] w-[12px]" fill="#666">
          <path d="M0 0h12v8H4l-3 3V8H0z" />
        </svg>
        <span className="ml-[2px]">Comments</span>
        <div className="ml-[17px] flex h-[16px] w-[32px] items-center justify-center bg-[#d2d2d2]">
          <svg viewBox="0 0 12 12" className="h-[11px] w-[11px]" fill="none" stroke="#666"><rect x=".5" y=".5" width="11" height="11" /><path d="M3.500 .5v11M6 3h3v4H6z" /></svg>
        </div>
        <svg viewBox="0 0 12 12" className="ml-[11px] h-[11px] w-[11px]" fill="none" stroke="#888"><rect x=".5" y="1" width="4" height="4" /><rect x="7" y="1" width="4" height="4" /><rect x=".5" y="7" width="4" height="4" /><rect x="7" y="7" width="4" height="4" /></svg>
        <svg viewBox="0 0 12 12" className="ml-[23px] h-[11px] w-[11px]" fill="none" stroke="#888"><path d="M1 1h4l1 1 1-1h4v10H7l-1-1-1 1H1zM6 2v8" /></svg>
        <svg viewBox="0 0 12 12" className="ml-[22px] h-[11px] w-[11px]" fill="none" stroke="#777"><path d="M1 1h10M2 1v6h8V1M6 7v4M4 11h4" /></svg>
        <Minus size={9} className="ml-[15px]" />
        <div className="ml-[3px] flex w-[82px] items-center">
          <div className="h-px w-[29px] bg-[#666]" />
          <div className="h-[9px] w-[3px] bg-[#555]" />
          <div className="h-px w-[9px] bg-[#666]" />
          <div className="h-[4px] w-px bg-[#666]" />
          <div className="h-px flex-1 bg-[#666]" />
        </div>
        <Plus size={9} className="ml-[3px]" />
        <span className="ml-[10px] w-[17px]">78%</span>
        <svg viewBox="0 0 12 12" className="mr-[6px] ml-[12px] h-[11px] w-[11px]" fill="none" stroke="#888"><rect x=".5" y=".5" width="11" height="11" strokeDasharray="2 1" /><path d="M3 6h6M6 3v6" /></svg>
      </div>
    </div>
  );
}

function BridgeArt() {
  return (
    <svg viewBox="0 0 70 33" className="h-[33px] w-[70px] shrink-0">
      <path d="M2 22C2 12 14 3 30 1c14-2 26 3 32 14 4 6 8 12 8 18H14C6 33 2 28 2 22z" fill="#c98a55" />
      <path d="M8 14C16 5 28 2 38 2c10 0 20 5 24 12H8z" fill="#8e5a6c" />
      <path d="M4 20h62l4 13H14C8 33 4 27 4 20z" fill="#6b7d72" />
      <path d="M32 33l30-7 8 7z" fill="#4f8f3d" />
      <path d="M14 22q18-8 40 0" fill="none" stroke="#3b3a3a" strokeWidth="1.500" />
      <path d="M22 5v20M40 5v20" stroke="#c89a3a" strokeWidth="2.500" />
      <path d="M4 24h60" stroke="#3a4a50" strokeWidth="2" />
      <path d="M6 29h22" stroke="#9fc0cf" strokeWidth="2" />
    </svg>
  );
}

function Pin({ active, running, children }: { active?: boolean; running?: boolean; children: React.ReactNode }) {
  return (
    <div className={`relative flex h-[33px] w-[41.3px] shrink-0 items-center justify-center ${active ? 'bg-[#3b3b3b]' : ''}`}>
      {children}
      {running && <div className="absolute right-[4px] bottom-0 left-[4px] h-[2px] bg-[#7fb6dc]" />}
    </div>
  );
}

function Taskbar() {
  return (
    <div className="flex h-[33px] shrink-0 items-center bg-[#111213] text-white">
      <div className="flex h-full w-[33px] shrink-0 items-center justify-center">
        <svg viewBox="0 0 14 14" className="h-[14px] w-[14px]" fill="#f2f2f2">
          <path d="M0 2l6-.9V6.500H0zM7 1l7-1v6.500H7zM0 7.500h6v5.400L0 12zM7 7.500h7V14l-7-1z" />
        </svg>
      </div>
      <div className="flex h-full w-[247px] shrink-0 items-center justify-between bg-[#f4f4f4] text-[12.7px] text-[#333]">
        <div className="flex items-center">
          <Search size={14} strokeWidth={1.3} className="ml-[15px] -scale-x-100 text-[#222]" />
          <span className="ml-[11px]">Type here to search</span>
        </div>
        <BridgeArt />
      </div>
      <div className="ml-[6px] flex w-[29px] shrink-0 justify-center">
        <svg viewBox="0 0 14 14" className="h-[14px] w-[14px]" fill="none" stroke="#ddd"><rect x="2" y="3" width="7" height="8" /><path d="M1 1h9M1 13h9M12 1v3M12 6v2M12 10v3" /></svg>
      </div>
      <div className="ml-[7px] flex">
        <Pin running>
          <svg viewBox="0 0 20 18" className="h-[17px] w-[19px]">
            <path d="M1 2h6l2 2h10v13H1z" fill="#f2c14e" />
            <path d="M1 6h18v11H1z" fill="#f9d976" />
            <rect x="6" y="10" width="8" height="7" fill="#3b82c4" />
          </svg>
        </Pin>
        <Pin>
          <svg viewBox="0 0 20 20" className="h-[19px] w-[19px]">
            <circle cx="10" cy="10" r="9.500" fill="#1b8fd0" />
            <path d="M1 10C2 4 8 0 13 1c4 1 6 5 6 8 0 3-3 4-6 4-2 0-4-1-4-2 0-2 3-2 3-4-3-1-8 0-11 3z" fill="#4ad07c" />
            <circle cx="12" cy="12" r="3.500" fill="#0f3f6f" />
          </svg>
        </Pin>
        <Pin>
          <svg viewBox="0 0 20 20" className="h-[19px] w-[19px]">
            <circle cx="10" cy="10" r="9.500" fill="#e8453c" />
            <path d="M10 10L1.800 14.700A9.500 9.500 0 0 0 10 19.500l4.500-6z" fill="#34a853" />
            <path d="M10 5.500h8.400A9.500 9.500 0 0 1 10 19.500l4-7z" fill="#fbbc05" />
            <circle cx="10" cy="10" r="4.500" fill="#fff" />
            <circle cx="10" cy="10" r="3.500" fill="#4285f4" />
          </svg>
        </Pin>
        <Pin active running>
          <div className="flex h-[19px] w-[19px] items-center justify-center rounded-full bg-[#d9512c] text-[8px] font-bold text-white">P</div>
        </Pin>
        <Pin running>
          <svg viewBox="0 0 20 18" className="h-[18px] w-[19px]">
            <rect x="5" y="0" width="15" height="18" fill="#21a366" />
            <rect x="12" y="0" width="8" height="9" fill="#33c481" />
            <rect x="0" y="4" width="10" height="10" fill="#107c41" />
            <path d="M3 6.500l4 5M7 6.500l-4 5" stroke="#fff" strokeWidth="1.200" />
          </svg>
        </Pin>
        <Pin running>
          <svg viewBox="0 0 14 20" className="h-[19px] w-[14px]">
            <rect width="14" height="20" fill="#8a949c" />
            <rect x="2" y="2" width="10" height="4" fill="#5ba7d8" />
            <path d="M2 8h2.500v2H2zM5.800 8h2.500v2H5.800zM9.500 8H12v2H9.500zM2 12h2.500v2H2zM5.800 12h2.500v2H5.800zM2 16h2.500v2H2zM5.800 16h2.500v2H5.800z" fill="#e6e6e6" />
            <rect x="9.500" y="12" width="2.500" height="6" fill="#3d7fb5" />
          </svg>
        </Pin>
        <Pin running>
          <svg viewBox="0 0 18 18" className="h-[18px] w-[18px]">
            <rect width="18" height="18" rx="2" fill="#c8171e" />
            <path d="M3 14c4-2 5-6 5-10 1 4 3 6 7 6-4 0-9 1-12 4z" fill="none" stroke="#fff" strokeWidth="1.300" />
          </svg>
        </Pin>
        <Pin running>
          <div className="flex h-[19px] w-[19px] items-center justify-center rounded-full bg-[#2d6cf0] text-[5px] text-white">zoom</div>
        </Pin>
      </div>
      <div className="ml-auto flex h-full items-center text-[#eee]">
        <svg viewBox="0 0 20 20" className="h-[19px] w-[19px]">
          <circle cx="10" cy="11" r="7" fill="#f0a33a" />
          <path d="M3 6a3 3 0 0 1 5-3 4 4 0 0 1 7 2 3 3 0 0 1-2 4H6a3 3 0 0 1-3-3zM11 18a3 3 0 0 1 1-5 3 3 0 0 1 6 1 2 2 0 0 1 0 4z" fill="#c7d5e6" />
        </svg>
        <span className="ml-[6px] text-[11.8px] whitespace-nowrap">29°C&nbsp; Partly sunny</span>
        <ChevronUp size={13} strokeWidth={1.3} className="ml-[20px]" />
        <svg viewBox="0 0 12 14" className="ml-[8px] h-[13px] w-[12px]" fill="none" stroke="#ddd"><rect x="2" y="1" width="7" height="10" rx="3" /><path d="M10 5v3M1 13h9" /></svg>
        <svg viewBox="0 0 14 10" className="ml-[6px] h-[10px] w-[14px]" fill="#ddd"><rect x="2" y="2" width="12" height="8" /><rect y="0" width="4" height="3" /></svg>
        <svg viewBox="0 0 14 14" className="ml-[9px] h-[14px] w-[14px]" fill="none" stroke="#ddd"><path d="M1 13C4 8 10 2 12 1c2 2-3 8-6 10M4 5c2-1 5 0 6 3" /></svg>
        <span className="ml-[12px] text-[10.5px]">ENG</span>
        <div className="ml-[8px] flex w-[52px] flex-col items-center text-[10.5px] leading-[15px] whitespace-nowrap">
          <span>10:44 AM</span>
          <span>13/02/2026</span>
        </div>
        <div className="relative mr-[22px] ml-[15px] h-[15px] w-[13px]">
          <div className="h-[12px] w-[13px] bg-[#eee]" />
          <div className="absolute -right-[4px] -bottom-[2px] flex h-[11px] w-[11px] items-center justify-center rounded-full border border-[#ddd] bg-[#111] text-[7px]">2</div>
        </div>
      </div>
    </div>
  );
}

export default function App() {
  return (
    <div className="relative flex h-[720px] w-[1280px] flex-col overflow-hidden bg-[#e6e6e6] font-['Roboto',sans-serif]">
      <TitleBar />
      <TabBar />
      <Ribbon />
      <div className="flex min-h-0 flex-1">
        <ThumbnailPane />
        <Editor />
      </div>
      <StatusBar />
      <Taskbar />
      {/* mouse pointer over thumbnail 24 */}
      <svg viewBox="0 0 12 16" className="absolute top-[524px] left-[119px] h-[15px] w-[10px]" fill="#fff" stroke="#111">
        <path d="M1 1v12l3-3 2 5 2-1-2-5h4z" />
      </svg>
    </div>
  );
}
